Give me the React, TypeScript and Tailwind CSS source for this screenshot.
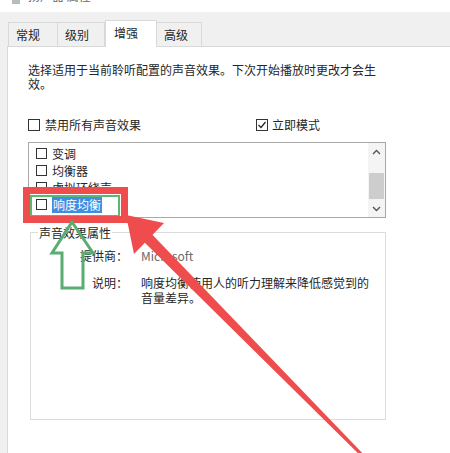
import React from 'react';

const Box: React.FC<{ checked?: boolean; size?: number }> = ({ checked, size = 12 }) => (
  <span
    className="flex items-center justify-center border border-[#333] bg-white shrink-0"
    style={{ width: size, height: size }}
  >
    {checked && (
      <svg width="10" height="10" viewBox="0 0 10 10">
        <polyline points="1.5,5 4,7.5 8.5,2" fill="none" stroke="#222" strokeWidth="1.2" />
      </svg>
    )}
  </span>
);

const Tab: React.FC<{ label: string; w: string; active?: boolean }> = ({ label, w, active }) =>
  active ? (
    <div className={`${w} h-[27px] -mb-px bg-white border border-b-0 border-[#d9d9d9] pl-[8px] pt-[4px] leading-[16px] relative z-10`}>
      {label}
    </div>
  ) : (
    <div className={`${w} h-[24px] bg-[#f0f0f0] border border-b-0 border-[#d9d9d9] -ml-px first:ml-0 pl-[7px] pt-[4px] leading-[16px]`}>
      {label}
    </div>
  );

const effects = ['变调', '均衡器', '虚拟环绕声', '响度均衡'];

export default function App() {
  return (
    <div className="relative w-[450px] h-[453px] overflow-hidden bg-white text-[12px] text-[#262626] font-['Noto_Sans_CJK_SC',sans-serif]">
      {/* title bar, cut off at the top */}
      <div className="h-[12px] bg-white overflow-hidden flex items-start pl-[12px] gap-[8px]">
        <span className="w-[8px] h-[8px] -mt-[4px] bg-[#b4bcc4]" />
        <span className="-mt-[12px] text-[#666] leading-[16px]">扬声器 属性</span>
      </div>

      <div className="bg-[#f0f0f0] h-[441px] flex flex-col pl-[7px]">
        {/* tabs */}
        <div className="h-[34px] flex items-end pl-[1px]">
          <Tab label="常规" w="w-[50px]" />
          <Tab label="级别" w="w-[48px]" />
          <Tab label="增强" w="w-[52px]" active />
          <Tab label="高级" w="w-[46px]" />
        </div>

        {/* page */}
        <div className="flex-1 bg-white border-l border-t border-[#d9d9d9] pl-[20px] pt-[16px] flex flex-col">
          <p className="leading-[14px]">
            选择适用于当前聆听配置的声音效果。下次开始播放时更改才会生
            <br />
            效。
          </p>

          <div className="mt-[26px] h-[16px] flex items-center">
            <div className="w-[228px] flex items-center gap-[5px]">
              <Box />
              <span>禁用所有声音效果</span>
            </div>
            <div className="flex items-center gap-[4px]">
              <Box checked />
              <span>立即模式</span>
            </div>
          </div>

          {/* effect list */}
          <div className="mt-[9px] w-[358px] h-[76px] border border-[#a8a8a8] flex">
            <div className="flex-1 pt-[2px] overflow-hidden">
              {effects.map((e, i) => (
                <div key={e} className="h-[17px] flex items-center pl-[7px] gap-[5px]">
                  <Box size={11} />
                  {i === effects.length - 1 ? (
                    <span className="bg-[#3c8fe4] text-white leading-[16px] px-[1px]">{e}</span>
                  ) : (
                    <span className="leading-[16px]">{e}</span>
                  )}
                </div>
              ))}
            </div>
            <div className="w-[17px] flex flex-col bg-[#f4f4f4]">
              <div className="h-[17px] flex items-center justify-center">
                <svg width="9" height="6" viewBox="0 0 9 6">
                  <polyline points="1,5 4.5,1.5 8,5" fill="none" stroke="#555" strokeWidth="1.4" />
                </svg>
              </div>
              <div className="flex-1 pt-[13px] px-[1px]">
                <div className="h-[26px] bg-[#cdcdcd]" />
              </div>
              <div className="h-[17px] flex items-center justify-center">
                <svg width="9" height="6" viewBox="0 0 9 6">
                  <polyline points="1,1 4.5,4.5 8,1" fill="none" stroke="#555" strokeWidth="1.4" />
                </svg>
              </div>
            </div>
          </div>

          {/* properties group */}
          <div className="mt-[14px] ml-[2px] w-[356px] h-[188px] border border-[#dcdcdc] flex flex-col">
            <span className="-mt-[8px] ml-[7px] px-[1px] w-fit bg-white leading-[15px]">声音效果属性</span>
            <div className="mt-[8px] flex leading-[15px]">
              <span className="w-[97px] text-right">提供商：</span>
              <span className="ml-[13px] text-[#6a6a6a]">Microsoft</span>
            </div>
            <div className="mt-[12px] flex leading-[15px]">
              <span className="w-[97px] text-right">说明：</span>
              <span className="ml-[13px]">
                响度均衡使用人的听力理解来降低感觉到的
                <br />
                音量差异。
              </span>
            </div>
          </div>
        </div>
      </div>

      {/* annotations drawn over the dialog */}
      <svg className="absolute inset-0 pointer-events-none" width="450" height="453" viewBox="0 0 450 453">
        <rect x="31" y="196" width="88" height="20" fill="none" stroke="#5cb870" strokeWidth="2" />
        <rect x="26.5" y="190.5" width="98" height="29" fill="none" stroke="#ef4d4d" strokeWidth="7" />
        <polygon points="144,226 363.1,453.9 360.9,456.1 136,234" fill="#ef4d4d" />
        <polygon points="126,215 164,223 134,254" fill="#ef4d4d" />
        <polygon
          points="72,222 93,253 83,253 83,288 62,288 62,253 52,253"
          fill="none"
          stroke="#58ad72"
          strokeWidth="3"
          strokeLinejoin="miter"
        />
      </svg>
    </div>
  );
}
